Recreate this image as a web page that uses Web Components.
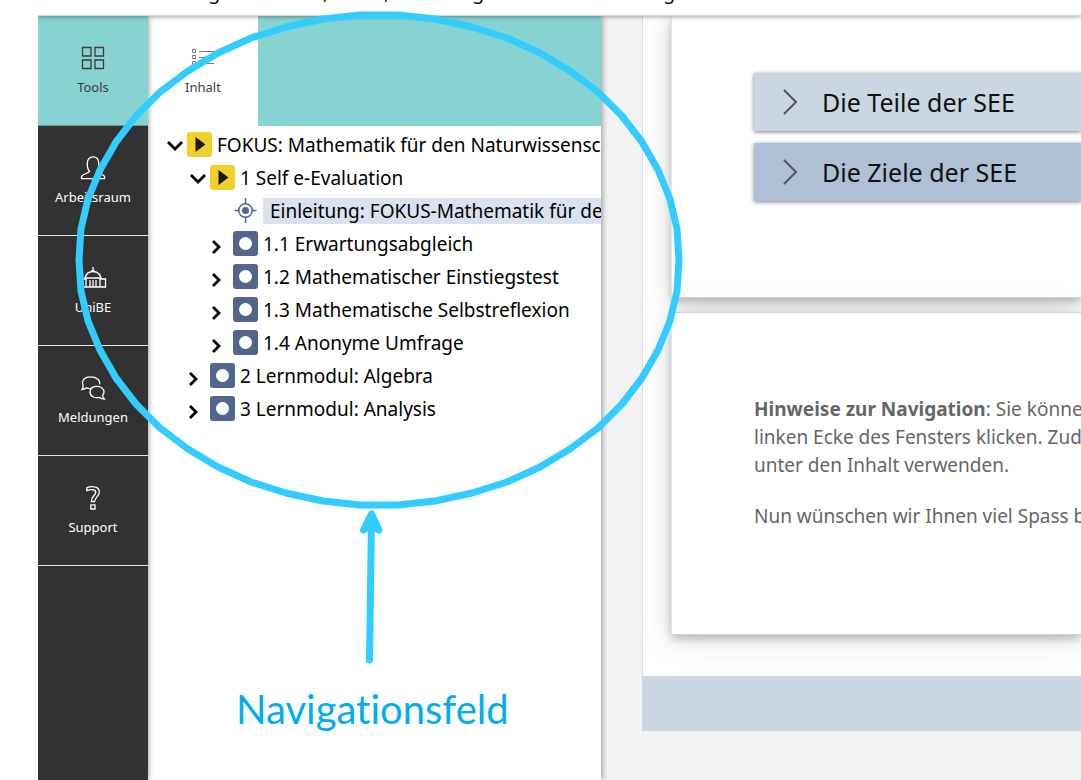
<!DOCTYPE html>
<html lang="de">
<head>
<meta charset="utf-8">
<title>Navigationsfeld</title>
<style>
  body { margin: 0; background: #fff; font-family: "Noto Sans", "Open Sans", sans-serif; color: #161616; }
</style>
</head>
<body>
<app-shell>
  <top-bar slot="header"></top-bar>
  <main-menu slot="menu">
    <menu-item icon="tools" active>Tools</menu-item>
    <menu-item icon="person">Arbeitsraum</menu-item>
    <menu-item icon="dome">UniBE</menu-item>
    <menu-item icon="chat">Meldungen</menu-item>
    <menu-item icon="help">Support</menu-item>
  </main-menu>
  <tool-drawer slot="drawer">
    <tree-item level="1" kind="play" open>FOKUS: Mathematik für den Naturwissenschaften</tree-item>
    <tree-item level="2" kind="play" open>1 Self e-Evaluation</tree-item>
    <tree-item level="3" kind="target">Einleitung: FOKUS-Mathematik für den</tree-item>
    <tree-item level="3" kind="dot">1.1 Erwartungsabgleich</tree-item>
    <tree-item level="3" kind="dot">1.2 Mathematischer Einstiegstest</tree-item>
    <tree-item level="3" kind="dot">1.3 Mathematische Selbstreflexion</tree-item>
    <tree-item level="3" kind="dot">1.4 Anonyme Umfrage</tree-item>
    <tree-item level="2" kind="dot">2 Lernmodul: Algebra</tree-item>
    <tree-item level="2" kind="dot">3 Lernmodul: Analysis</tree-item>
  </tool-drawer>
  <learning-page slot="content">
    <accordion-button slot="sections">Die Teile der SEE</accordion-button>
    <accordion-button slot="sections" tone="dark">Die Ziele der SEE</accordion-button>
    <text-block slot="notes"><b>Hinweise zur Navigation</b>: Sie können<br>linken Ecke des Fensters klicken. Zudem<br>unter den Inhalt verwenden.</text-block>
    <text-block slot="notes">Nun wünschen wir Ihnen viel Spass beim</text-block>
  </learning-page>
</app-shell>
<hint-overlay>Navigationsfeld</hint-overlay>

<script>
const define = (name, render) => customElements.define(name, class extends HTMLElement {
  connectedCallback() {
    if (this.shadowRoot) return;
    this.attachShadow({ mode: 'open' }).innerHTML = render(this);
  }
});

const menuIcons = {
  tools: '<path d="M1.5 1.5h8.5v8.5H1.5zM14 1.5h8.5v8.5H14zM1.5 14h8.5v8.5H1.5zM14 14h8.5v8.5H14z"/>',
  person: '<path d="M8.500 15.500C5.500 11.500 4.500 1 12 .8S18.500 11.500 15.500 15.500c2 1.800 5 2.200 7.500 4.200.8.700.8 1.800.5 3H.6c-.3-1.200-.3-2.300.5-3 2.400-2 5.400-2.400 7.400-4.200z"/>',
  dome: '<path d="M12 1v4M10 5h4M4 12c1-4 3.500-6.500 8-6.500s7 2.500 8 6.500zM5 12v9M19 12v9M-.5 13H5v8H-.5zM19 13h5.500v8H19zM-.5 21h25M9 14v7M12 14v7M15 14v7"/>',
  chat: '<path d="M10 12.500c-1.500.3-3 .2-4.500-.6-1.500.8-3 1.600-4.500 1.800C2 12.400 2.300 10.500 2 9 .2 4 4.200.8 9.500.8 15.500.8 19.500 4 18.600 8.300M9 16c0-4 3.500-5.700 7-5.700 4 0 7 2.400 7 5.700 0 1.400-.8 2.400-1.400 3.200.1 1.600.8 2.800 1.700 3.800-2 0-3.700-.7-4.800-1.600C13.500 22.500 9 20.500 9 16z"/>',
  help: '<path d="M5.800 4.600V1.800C8 .7 10.500.6 13 .8c3.700.2 5.500 2.500 5.300 5.500-.3 4.200-4.600 5-4.600 9.200h-3.400c0-5.500 4.500-6 4.500-9.200 0-3-4.500-3.200-9-1.700zM9.800 18.800h4.200v4.200H9.800z"/>'
};

define('app-shell', () => `
  <style>
    :host { display: flex; flex-direction: column; height: 100vh; min-height: 780px; overflow: hidden; padding-left: 38px; }
    .body { flex: 1; display: flex; min-height: 0; }
    .content { flex: 1; min-width: 0; display: flex; background: #f2f2f2; }
  </style>
  <slot name="header"></slot>
  <div class="body">
    <slot name="menu"></slot>
    <slot name="drawer"></slot>
    <main class="content"><slot name="content"></slot></main>
  </div>`);

define('top-bar', () => `
  <style>
    :host { display: block; flex: none; position: relative; z-index: 3; height: 16px; box-sizing: border-box;
      background: #fff; border-bottom: 1px solid #d0d3d3; box-shadow: 0 1px 4px rgba(0,0,0,.35);
      clip-path: inset(0 0 -10px 0); }
    header { height: 15px; overflow: hidden; display: grid; align-items: start;
      grid-template-columns: 115px 61px 88px 191px 1fr; padding-left: 170px; }
    span { font-size: 20px; line-height: 20px; height: 2px; display: flex; align-items: end; }
  </style>
  <header><span>g</span><span>,</span><span>,</span><span>g</span><span>g</span></header>`);

define('main-menu', () => `
  <style>
    :host { display: block; flex: none; width: 110px; background: #323232; position: relative; z-index: 2;
      box-shadow: 1px 0 5px rgba(0,0,0,.35); clip-path: inset(0 -10px 0 0); }
    nav { display: flex; flex-direction: column; }
  </style>
  <nav aria-label="Hauptmenü"><slot></slot></nav>`);

define('menu-item', el => `
  <style>
    :host { display: block; color: #fff; }
    :host([active]) { color: #3c3c3c; background: #87d3d2; }
    button { all: unset; box-sizing: border-box; cursor: pointer; width: 100%; height: 110px; padding-top: 30px;
      border-bottom: 1px solid #e4e4e4; display: flex; flex-direction: column; align-items: center; gap: 7px;
      font-size: 13px; line-height: 20px; }
    :host([active]) button { border-bottom-color: #5f9c9b; }
    svg { width: 24px; height: 24px; overflow: visible; fill: none; stroke: currentColor; stroke-width: 1.3; }
  </style>
  <button type="button"><svg viewBox="0 0 24 24" aria-hidden="true">${menuIcons[el.getAttribute('icon')]}</svg><slot></slot></button>`);

define('tool-drawer', () => `
  <style>
    :host { display: block; flex: none; width: 453px; background: #fff; position: relative; z-index: 1;
      box-shadow: 1px 0 6px rgba(0,0,0,.4); }
    .tabs { height: 110px; background: #87d3d2; display: flex; }
    button { all: unset; box-sizing: border-box; width: 110px; height: 110px; padding-top: 30px; background: #fff;
      display: flex; flex-direction: column; align-items: center; gap: 7px; font-size: 13px; line-height: 20px;
      color: #3c3c3c; cursor: pointer; }
    svg { width: 24px; height: 24px; fill: none; stroke: #777; }
    .tree { padding: 2px 0 0 18px; overflow: hidden; color: #000; }
  </style>
  <div class="tabs"><button type="button"><svg viewBox="0 0 24 24" aria-hidden="true"><path d="M1.500 3.500h3v3h-3zM1.500 9.500h3v3h-3zM1.500 15.500h3v3h-3zM8 5.500h15M8 11.500h15M8 17.500h15"/></svg>Inhalt</button></div>
  <div class="tree" role="tree"><slot></slot></div>`);

const treeIcons = {
  play: '<rect width="25" height="25" rx="3" fill="#f1d02a"/><path d="M8.500 5v15l10-7.500z" fill="#1a1a1a"/>',
  dot: '<rect width="25" height="25" rx="3" fill="#52668c"/><circle cx="12.500" cy="12.500" r="6.500" fill="#fff"/>',
  target: '<g fill="none" stroke="#52668c" stroke-width="1.500"><circle cx="12.500" cy="12.500" r="6.800"/><path d="M12.500 0v6M12.500 19v6M1.500 12.500h5M18.500 12.500h5"/></g><circle cx="12.500" cy="12.500" r="3.500" fill="#52668c"/>'
};

define('tree-item', el => {
  const open = el.hasAttribute('open');
  const kind = el.getAttribute('kind');
  const arrow = open ? 'M2 6l7 7 7-7' : 'M1 3l6 6-6 6';
  return `
  <style>
    :host { display: block; }
    :host([level="2"]) { padding-left: 23px; }
    :host([level="3"]) { padding-left: 46px; }
    .row { display: flex; align-items: center; height: 33px; white-space: nowrap; }
    button { all: unset; flex: none; width: 17px; height: 17px; margin-right: 4px; cursor: pointer; }
    button svg { width: 17px; height: 17px; display: block; overflow: visible; fill: none; stroke: #000; stroke-width: 2.800; }
    .closed { padding-top: 6px; }
    .icon { flex: none; width: 25px; height: 25px; margin-right: 5px; }
    a { color: inherit; text-decoration: none; font-size: 19px; line-height: 26px; }
    .current { background: #dae1ef; padding: 0 7px; flex: 1; }
  </style>
  <div class="row" role="treeitem">
    <button type="button" aria-label="Umschalten" class="${open ? '' : 'closed'}">${kind === 'target' ? '' : `<svg viewBox="0 0 17 17"><path d="${arrow}"/></svg>`}</button>
    <svg class="icon" viewBox="0 0 25 25" aria-hidden="true">${treeIcons[kind]}</svg>
    <a href="#" class="${kind === 'target' ? 'current' : ''}"><slot></slot></a>
  </div>`;
});

define('learning-page', () => `
  <style>
    :host { display: block; flex: 1; min-width: 0; margin-left: 41px; }
    .sheet { background: #fff; border-left: 1px solid #ddd; padding: 0 0 41px 28px; overflow: hidden; }
    section { background: #fff; border: 1px solid #d2d2d2; border-right: 0; padding-left: 82px; box-sizing: border-box;
      border-left-color: #e4e4e4; box-shadow: 0 4px 8px rgba(0,0,0,.2), 0 3px 28px rgba(0,0,0,.17); }
    .sections { height: 282px; border-top: 0; padding-top: 57px; display: flex; flex-direction: column; gap: 12px; }
    .notes { margin-top: 14px; height: 323px; padding-top: 82px; position: relative; }
    .foot { height: 55px; background: #cad6e2; }
  </style>
  <div class="sheet">
    <section class="sections"><slot name="sections"></slot></section>
    <section class="notes"><slot name="notes"></slot></section>
  </div>
  <div class="foot"></div>`);

define('accordion-button', () => `
  <style>
    :host { display: block; background: #cad6e2; box-shadow: 0 1px 4px rgba(0,0,0,.5); }
    :host([tone="dark"]) { background: #afbfd6; }
    button { all: unset; display: flex; align-items: center; gap: 23px; width: 100%; height: 58px; box-sizing: border-box;
      padding-left: 28px; font-size: 25px; line-height: 32px; color: #111; cursor: pointer; white-space: nowrap; }
    svg { width: 17px; height: 26px; fill: none; stroke: #50555c; stroke-width: 2; }
  </style>
  <button type="button" aria-expanded="false"><svg viewBox="0 0 17 26" aria-hidden="true"><path d="M2 1l12 12-12 12"/></svg><slot></slot></button>`);

define('text-block', () => `
  <style>
    :host { display: block; white-space: nowrap; margin-bottom: 23px; color: #666; }
    p { margin: 0; font-size: 19px; line-height: 28px; }
  </style>
  <p><slot></slot></p>`);

// Fifty straight strokes make up the ring round the navigation tree.
const ring = Array.from({ length: 50 }, (_, i) => {
  const a = i * Math.PI / 25;
  return `${Math.round(379 + 300 * Math.cos(a))},${Math.round(260 + 245 * Math.sin(a))}`;
}).join(' ');

define('hint-overlay', () => `
  <style>
    :host { position: absolute; top: 0; left: 0; z-index: 10; pointer-events: none; display: block; }
    svg { display: block; width: 700px; height: 681px; fill: none; stroke: #33ccff; stroke-width: 7;
      stroke-linecap: round; stroke-linejoin: round; }
    div { padding-left: 236px; font-family: Lato, "Open Sans", sans-serif; font-variant-ligatures: none;
      font-size: 40px; line-height: 56px; color: #00adef; }
  </style>
  <svg viewBox="0 0 700 681" aria-hidden="true"><polygon points="${ring}"/><path d="M369.500 660L371.500 516"/><path d="M371.500 514l-8 16 8-5 7.500 5z" fill="#33ccff"/></svg>
  <div><slot></slot></div>`);
</script>
</body>
</html>
